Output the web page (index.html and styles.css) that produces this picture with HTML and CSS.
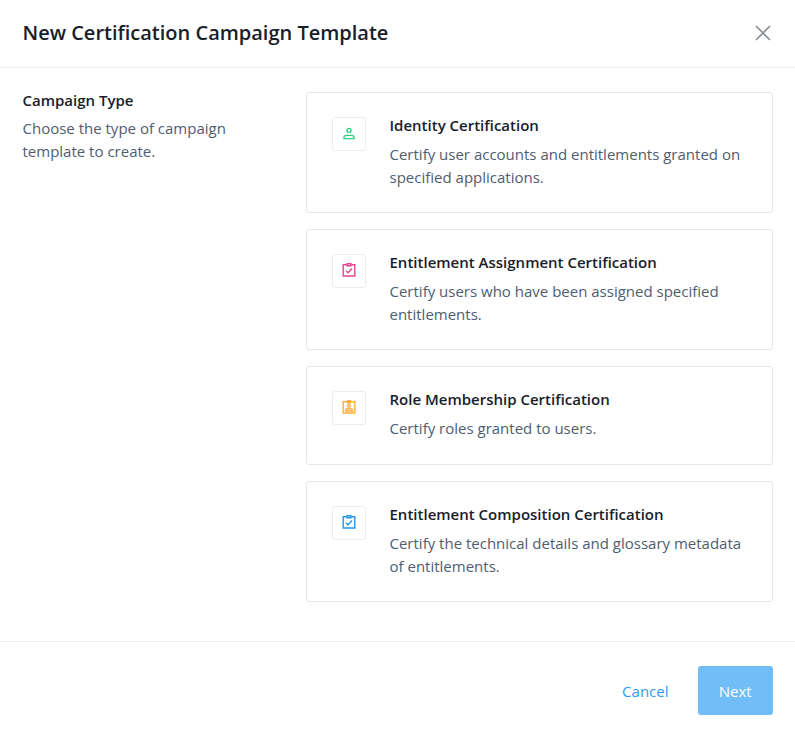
FILE: index.html
```html
<!DOCTYPE html>
<html lang="en">
<head>
    <meta charset="UTF-8">
    <meta name="viewport" content="width=device-width, initial-scale=1.0">
    <title>New Certification Campaign Template</title>
    <link rel="stylesheet" href="styles.css">
</head>
<body>
    <div class="modal">
        <header class="modal-header">
            <h1>New Certification Campaign Template</h1>
            <button class="close-btn" aria-label="Close">
                <svg width="16" height="16" viewBox="0 0 16 16"><path d="M1 1L15 15M15 1L1 15" stroke="#8a8f94" stroke-width="1.6" fill="none"/></svg>
            </button>
        </header>

        <main class="modal-body">
            <div class="intro">
                <h2>Campaign Type</h2>
                <p>Choose the type of campaign template to create.</p>
            </div>

            <div class="card-list">
                <div class="card">
                    <div class="icon-box">
                        <svg width="14" height="14" viewBox="0 0 14 14" fill="none" stroke="#2fd07f" stroke-width="1.4">
                            <circle cx="7" cy="3.4" r="2"/>
                            <path d="M2 11.6V10.4C2 9.2 3.2 8.4 4.4 8.4H9.6C10.8 8.4 12 9.2 12 10.4V11.6Z"/>
                        </svg>
                    </div>
                    <div class="card-text">
                        <h3>Identity Certification</h3>
                        <p>Certify user accounts and entitlements granted on specified applications.</p>
                    </div>
                </div>

                <div class="card">
                    <div class="icon-box">
                        <svg class="icon-up" width="14" height="14" viewBox="0 0 14 14" fill="none" stroke="#e0478f" stroke-width="1.4">
                            <path d="M4.5 1.8H1.2V13H12.8V1.8H9.5"/>
                            <path d="M5 .8H9V2.8H5Z"/>
                            <path d="M4 7.8L6 9.8L10 5.6"/>
                        </svg>
                    </div>
                    <div class="card-text">
                        <h3>Entitlement Assignment Certification</h3>
                        <p>Certify users who have been assigned specified entitlements.</p>
                    </div>
                </div>

                <div class="card card-short">
                    <div class="icon-box">
                        <svg class="icon-up" width="14" height="14" viewBox="0 0 14 14" fill="none" stroke="#ffae42" stroke-width="1.4">
                            <path d="M1.2 1.8H12.8V13H1.2Z"/>
                            <path d="M5.5 .8H8.5V2.8H5.5Z"/>
                            <circle cx="7" cy="5.8" r="1.4"/>
                            <path d="M3.6 11V10.2C3.6 9.2 4.6 8.8 5.4 8.8H8.6C9.4 8.8 10.4 9.2 10.4 10.2V11Z"/>
                        </svg>
                    </div>
                    <div class="card-text">
                        <h3>Role Membership Certification</h3>
                        <p>Certify roles granted to users.</p>
                    </div>
                </div>

                <div class="card">
                    <div class="icon-box">
                        <svg class="icon-up" width="14" height="14" viewBox="0 0 14 14" fill="none" stroke="#2196e8" stroke-width="1.4">
                            <path d="M4.5 1.8H1.2V13H12.8V1.8H9.5"/>
                            <path d="M5 .8H9V2.8H5Z"/>
                            <path d="M4 7.8L6 9.8L10 5.6"/>
                        </svg>
                    </div>
                    <div class="card-text">
                        <h3>Entitlement Composition Certification</h3>
                        <p>Certify the technical details and glossary metadata of entitlements.</p>
                    </div>
                </div>
            </div>
        </main>

        <footer class="modal-footer">
            <button class="cancel-btn">Cancel</button>
            <button class="next-btn">Next</button>
        </footer>
    </div>
</body>
</html>
```

FILE: styles.css
```css
* {
    box-sizing: border-box;
}
body {
    margin: 0;
    background-color: #fff;
    font-family: "Open Sans", "Noto Sans", sans-serif;
    color: #18202a;
}
h1, h2, h3, p {
    margin: 0;
}
button {
    font-family: inherit;
    cursor: pointer;
    border: none;
    background: none;
}
.modal {
    width: 795px;
    height: 738px;
    display: flex;
    flex-direction: column;
}
.modal-header {
    height: 68px;
    padding: 0 24px 2px 22.5px;
    border-bottom: 1px solid #e9eef2;
    display: flex;
    align-items: center;
    justify-content: space-between;
}
.modal-header h1 {
    font-size: 20px;
    font-weight: 600;
    line-height: 28px;
}
.close-btn {
    padding: 0;
    display: flex;
}
.modal-body {
    height: 573px;
    padding: 24px 22px 0 22.5px;
    display: flex;
}
.intro {
    width: 283.5px;
    flex-shrink: 0;
    margin-top: -1px;
}
.intro h2 {
    font-size: 15px;
    font-weight: 600;
    line-height: 18px;
    margin-bottom: 8px;
}
.intro p {
    width: 230px;
    font-size: 15px;
    line-height: 23px;
    color: #4f5d70;
}
.card-list {
    flex: 1;
    display: flex;
    flex-direction: column;
    gap: 16px;
}
.card {
    border: 1px solid #e3e8ec;
    border-radius: 3px;
    padding: 24px 24px 23px;
    display: flex;
    gap: 24px;
}
.card-short {
    min-height: 99px;
}
.icon-box {
    width: 34px;
    height: 34px;
    margin-left: 1px;
    flex-shrink: 0;
    border: 1px solid #e9eef3;
    border-radius: 3px;
    display: flex;
    align-items: center;
    justify-content: center;
}
.icon-up {
    margin-bottom: 2px;
}
.card-text {
    margin-left: -0.5px;
}
.card-text h3 {
    font-size: 15px;
    font-weight: 600;
    line-height: 18px;
    margin-top: -1px;
    margin-bottom: 9px;
}
.card-text p {
    font-size: 15px;
    line-height: 23px;
    color: #4f5d70;
}
.modal-footer {
    flex: 1;
    border-top: 1px solid #e9eef2;
    padding: 24px 22px 0 0;
    display: flex;
    justify-content: flex-end;
    align-items: flex-start;
    gap: 29px;
}
.cancel-btn {
    height: 49px;
    padding: 0;
    font-size: 15px;
    color: #2a9df4;
}
.next-btn {
    width: 75.5px;
    height: 49px;
    font-size: 15px;
    color: #fff;
    background-color: #70bdf8;
    border-radius: 3px;
}
```
